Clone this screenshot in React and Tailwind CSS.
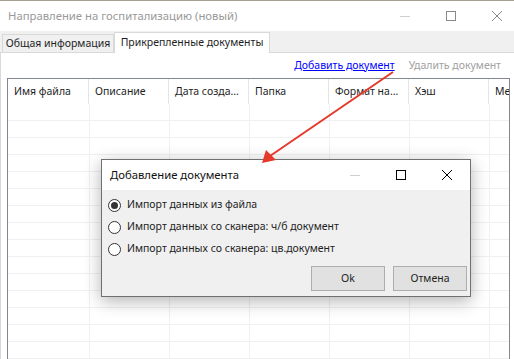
import React from "react";

const columns = ["Имя файла", "Описание", "Дата созда...", "Папка", "Формат на...", "Хэш", "Ме"];
const rows = Array.from({ length: 15 });

const RadioOption = ({ label, checked }) => (
  <label className="flex items-center gap-[6px] h-[22px]">
    <span className="w-[13px] h-[13px] rounded-full border border-[#333] bg-white flex items-center justify-center">
      {checked && <span className="w-[7px] h-[7px] rounded-full bg-[#333]" />}
    </span>
    <span>{label}</span>
  </label>
);

const WinControls = ({ dark }) => (
  <div className="flex items-center h-full">
    <div className="w-[46px] flex justify-center">
      <span className="w-[10px] h-px bg-[#cfcfcf]" />
    </div>
    <div className="w-[46px] flex justify-center">
      <span className={`w-[10px] h-[10px] border ${dark ? "border-black" : "border-[#8a8a8a]"}`} />
    </div>
    <div className="w-[46px] flex justify-center">
      <svg width="10" height="10" viewBox="0 0 10 10">
        <path d="M0 0L10 10M10 0L0 10" stroke={dark ? "#000" : "#8a8a8a"} strokeWidth="1" />
      </svg>
    </div>
  </div>
);

export default function App() {
  return (
    <div className="relative w-[514px] h-[359px] overflow-hidden bg-white text-[10.5px] text-[#1e1e1e] border-t border-[#a89f92]" style={{ fontFamily: '"Noto Sans", "Open Sans", sans-serif' }}>
      {/* title bar */}
      <div className="flex items-center justify-between h-[30px] pl-[8px]">
        <span className="text-[11.3px] text-[#999]">Направление на госпитализацию (новый)</span>
        <div className="h-full mr-[-6px]">
          <WinControls />
        </div>
      </div>

      {/* tabs area */}
      <div className="bg-[#f0f0f0] h-[328px] flex flex-col">
        <div className="flex items-end h-[21px] pl-[2px]">
          <div className="h-[18px] w-[112px] border border-b-0 border-[#d9d9d9] flex items-center justify-center">Общая информация</div>
          <div className="h-[21px] w-[156px] bg-white border border-b-0 border-[#d9d9d9] flex items-center justify-center mb-[-1px] relative z-10">Прикрепленные документы</div>
        </div>
        <div className="flex-1 bg-white border-t border-l border-[#d9d9d9] flex flex-col">
          <div className="flex justify-end gap-[14px] h-[25px] items-center pr-[13px]">
            <span className="text-[#0000ff] underline">Добавить документ</span>
            <span className="text-[#a0a0a0]">Удалить документ</span>
          </div>
          <div className="ml-[6px] w-[503px] flex-1 border-l border-r border-t border-[#828790] overflow-hidden">
            <div className="flex h-[25px]">
              {columns.map((c, i) => (
                <div key={c} className={`${i === 0 ? "w-[81px]" : "w-[80px]"} shrink-0 h-full flex items-center pl-[6px] border-r border-[#e5e5e5] whitespace-nowrap overflow-hidden`}>
                  {c}
                </div>
              ))}
            </div>
            {rows.map((_, r) => (
              <div key={r} className="flex h-[17px] border-b border-[#f0f0f0]">
                {columns.map((c, i) => (
                  <div key={c} className={`${i === 0 ? "w-[82px]" : "w-[80px]"} shrink-0 h-full border-r border-[#f0f0f0]`} />
                ))}
              </div>
            ))}
          </div>
        </div>
      </div>

      {/* dialog */}
      <div className="absolute left-[101px] top-[158px] w-[370px] h-[138px] border border-[#707070] bg-[#f0f0f0] shadow-[0_4px_16px_rgba(0,0,0,0.3)] flex flex-col">
        <div className="bg-white h-[30px] flex items-center justify-between pl-[8px]">
          <span className="text-[11.3px] text-[#111]">Добавление документа</span>
          <div className="h-full">
            <WinControls dark />
          </div>
        </div>
        <div className="flex flex-col pl-[6px] pt-[4px]">
          <RadioOption label="Импорт данных из файла" checked />
          <RadioOption label="Импорт данных со сканера: ч/б документ" />
          <RadioOption label="Импорт данных со сканера: цв.документ" />
        </div>
        <div className="flex justify-end gap-[8px] pr-[3px] mt-[6px]">
          <button className="w-[74px] h-[25px] bg-[#e1e1e1] border border-[#adadad]">Ok</button>
          <button className="w-[74px] h-[25px] bg-[#e1e1e1] border border-[#adadad]">Отмена</button>
        </div>
      </div>

      {/* arrow */}
      <svg className="absolute left-0 top-0 pointer-events-none" width="514" height="359">
        <line x1="393" y1="71" x2="270" y2="155" stroke="#e5392b" strokeWidth="2" />
        <polygon points="262,162 266,149 276,159" fill="#e5392b" />
      </svg>
    </div>
  );
}
